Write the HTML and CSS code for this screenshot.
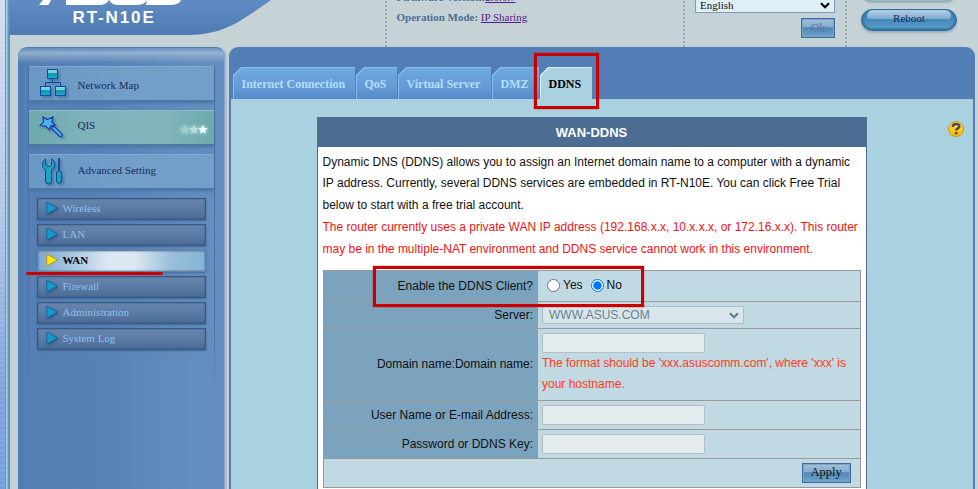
FILE: index.html
```html
<!DOCTYPE html>
<html lang="en">
<head>
<meta charset="utf-8">
<title>RT-N10E</title>
<link rel="stylesheet" href="styles.css">
</head>
<body>
<div class="page">
  <div class="edge"></div>
  <div class="app">
    <header class="header">
      <div class="brand">
        <svg class="brand-bg" width="376" height="36" viewBox="0 0 376 36">
          <defs><linearGradient id="hb" x1="0" y1="0" x2="0" y2="1"><stop offset="0" stop-color="#5f8bc2"/><stop offset="1" stop-color="#4f7ab3"/></linearGradient></defs>
          <path d="M0 0H261C229 22 214 35 174 35H0Z" fill="url(#hb)"/>
          <path d="M33 0h8l-2.500 5h-9.500zM56 0h42.500q0 3-7 5H56zM99 0h38q-2 5-11 5h-17q-8 0-10-5zM137 0h34q-1 5-12 5h-23z" fill="#fff"/>
        </svg>
        <span class="model">RT-N10E</span>
      </div>
      <div class="info dotted">
        <div>Firmware Version:<a>2.0.0.7</a></div>
        <div>Operation Mode: <a>IP Sharing</a></div>
      </div>
      <div class="lang dotted">
        <div class="select english">English
          <svg width="10" height="7" viewBox="0 0 10 7"><path d="M1 1.200l4 4 4-4" fill="none" stroke="#000" stroke-width="2.200"/></svg></div>
        <div class="btn ok">Ok</div>
      </div>
      <div class="actions dotted">
        <div class="pill ghost"></div>
        <div class="pill reboot"><span>Reboot</span></div>
      </div>
    </header>
    <div class="columns">
      <nav class="sidebar">
        <div class="rail">
          <div class="item">
            <svg width="32" height="34" viewBox="0 0 32 34"><defs><linearGradient id="ic" x1="0" y1="0" x2="0" y2="1"><stop offset="0" stop-color="#86d2df"/><stop offset=".42" stop-color="#6fcbd7"/><stop offset=".45" stop-color="#0791b5"/><stop offset="1" stop-color="#20b0cc"/></linearGradient></defs>
              <g fill="url(#ic)" stroke="#054d98"><path fill="none" d="M13.500 12v4M6.500 20v-4.500h15V20"/><rect x="8.500" y="2.500" width="10" height="9"/><rect x="1.500" y="19.500" width="10" height="9"/><rect x="16.500" y="19.500" width="10" height="9"/></g></svg>
            <span>Network Map</span>
          </div>
          <div class="item qis">
            <svg width="32" height="34" viewBox="0 0 32 34"><path d="M12.500 17.500l2.500-2.500 8 8.200q.6 2.800-2.200 2.300zM4 6l4.200 2.600L14 6l-1.200 5.200L16.500 14l-4.800.8-1.500 4-3.200-3.600L1 14.500l3.500-3.700z" fill="#4fb4e6" stroke="#153eae" stroke-width="1.200"/></svg>
            <span>QIS</span>
            <svg class="stars" width="28" height="12" viewBox="0 0 28 12"><defs><path id="st" d="M5 .800l1.400 3 3.300.400-2.400 2.200.6 3.300L5 8 2.100 9.700l.6-3.300L.3 4.200l3.300-.4z"/></defs><use href="#st" fill="#a1cdca"/><use href="#st" x="9" fill="#b7dfdd"/><use href="#st" x="18" fill="#f2ffff"/></svg>
          </div>
          <div class="item adv">
            <svg width="32" height="34" viewBox="0 0 32 34"><g fill="#1ea3c4" stroke="#054d87"><path d="M6.500 4v6l2 1.500h2l2-1.500V4q3.500 1.500 3.500 5.500 0 3.500-3.500 5.500v11q0 3-3 3t-3-3V15Q3.500 13 3.500 9.500 3.500 5.500 6.500 4z"/><path d="M20 3v13" stroke-width="1.800"/><rect x="17.500" y="16" width="5" height="12" rx="2"/></g></svg>
            <span>Advanced Setting</span>
          </div>
          <div class="submenu">
            <div class="sub"><svg width="12" height="14" viewBox="0 0 12 14"><path d="M.8 1l10.500 6L.8 13z"/></svg>Wireless</div>
            <div class="sub"><svg width="12" height="14" viewBox="0 0 12 14"><path d="M.8 1l10.500 6L.8 13z"/></svg>LAN</div>
            <div class="sub active"><svg width="12" height="14" viewBox="0 0 12 14"><path d="M.8 1l10.500 6L.8 13z"/></svg>WAN</div>
            <div class="sub"><svg width="12" height="14" viewBox="0 0 12 14"><path d="M.8 1l10.500 6L.8 13z"/></svg>Firewall</div>
            <div class="sub"><svg width="12" height="14" viewBox="0 0 12 14"><path d="M.8 1l10.500 6L.8 13z"/></svg>Administration</div>
            <div class="sub"><svg width="12" height="14" viewBox="0 0 12 14"><path d="M.8 1l10.500 6L.8 13z"/></svg>System Log</div>
          </div>
        </div>
      </nav>
      <main class="main">
        <div class="tabs">
          <div class="tab t1"><span>Internet Connection</span></div>
          <div class="tab t2"><span>QoS</span></div>
          <div class="tab t3"><span>Virtual Server</span></div>
          <div class="tab t4"><span>DMZ</span></div>
          <div class="tab t5 current"><span>DDNS</span></div>
        </div>
        <div class="content">
          <section class="panel">
            <h1>WAN-DDNS</h1>
            <div class="text">
              <p>Dynamic DNS (DDNS) allows you to assign an Internet domain name to a computer with a dynamic<br>IP address. Currently, several DDNS services are embedded in RT-N10E. You can click Free Trial<br>below to start with a free trial account.</p>
              <p class="warn">The router currently uses a private WAN IP address (192.168.x.x, 10.x.x.x, or 172.16.x.x). This router<br>may be in the multiple-NAT environment and DDNS service cannot work in this environment.</p>
            </div>
            <div class="form">
              <div class="label">Enable the DDNS Client?</div>
              <div class="field radios"><i class="radio"></i><span>Yes</span><i class="radio on"></i><span>No</span></div>
              <div class="label">Server:</div>
              <div class="field"><div class="select host">WWW.ASUS.COM
                <svg width="10" height="7" viewBox="0 0 10 7"><path d="M1 1.200l4 4 4-4" fill="none" stroke="#5d7f8c" stroke-width="2.200"/></svg></div></div>
              <div class="label even">Domain name:Domain name:</div>
              <div class="field domain"><div class="input"></div><p>The format should be 'xxx.asuscomm.com', where 'xxx' is<br>your hostname.</p></div>
              <div class="label">User Name or E-mail Address:</div>
              <div class="field"><div class="input"></div></div>
              <div class="label">Password or DDNS Key:</div>
              <div class="field"><div class="input"></div></div>
              <div class="foot"><div class="btn apply">Apply</div></div>
            </div>
          </section>
          <svg class="help" width="18" height="18" viewBox="0 0 18 18"><defs><linearGradient id="hg" x1="0" y1="0" x2="0" y2="1"><stop offset="0" stop-color="#f7e48a"/><stop offset=".5" stop-color="#f9cf20"/><stop offset="1" stop-color="#edb60c"/></linearGradient></defs><circle cx="9" cy="9" r="7.500" fill="url(#hg)" stroke="#c9981c"/><path d="M5.700 7Q5.700 4 9 4q3.400 0 3.400 2.300 0 1.400-1.700 2-1.500.5-1.500 2.200M9.200 12v2.300" fill="none" stroke="#4c4b55" stroke-width="2.400"/></svg>
        </div>
      </main>
    </div>
  </div>
  <div class="mark mark-tab"></div>
  <div class="mark mark-client"></div>
  <div class="mark-line"></div>
</div>
</body>
</html>
```
FILE: styles.css
```css
* { box-sizing: border-box; }
body { margin: 0; overflow: hidden; font-family: "Liberation Serif", serif; }
p, h1 { margin: 0; }
svg { display: block; flex: none; }

.page { position: relative; display: flex; width: 978px; height: 489px; overflow: hidden; background: #c5d2d6; }
.edge {
  width: 10px;
  background:
    linear-gradient(90deg, transparent 5px, #6798c7 5px, #6798c7 6px, #a4cfdf 6px, #a4cfdf 7px, #6d9fcb 8px, #5681b5 10px),
    repeating-linear-gradient(180deg, rgba(255,255,255,.13) 0 1px, transparent 1px 5px),
    linear-gradient(180deg, #d3def0 0, #c3d4ee 100px, #b4c9e9 200px, #7fa3dc 400px, #789fda 489px);
}
.app { flex: 1; display: flex; flex-direction: column; }

.header { display: flex; height: 47px; flex: none; }
.brand { position: relative; width: 375px; }
.brand-bg { position: absolute; left: 0; top: 0; }
.model { position: absolute; left: 62.500px; top: 8px; color: #fff; font: bold 17px/19px "Liberation Sans", sans-serif; letter-spacing: 1.900px; }
.dotted { background: repeating-linear-gradient(180deg, #c5d2d6 0 1px, #98a9b2 1px 3px, #c5d2d6 3px 4px) 0 0 / 2px 100% no-repeat; }
.info { width: 298px; padding-left: 11.500px; color: #4d6d92; font-weight: bold; font-size: 11px; line-height: 20px; }
.info div:first-child { margin-top: -13px; }
.info a { font-weight: normal; color: #551a8b; text-decoration: underline; }
.lang { width: 162px; padding-left: 12px; }
.select { display: flex; align-items: center; justify-content: space-between; }
.english { width: 140px; height: 20px; margin-top: -7px; padding: 5px 4px 1px; background: #e0eff5; border: 1px solid #7b9cc0; font-size: 11px; color: #111; }
.btn { display: flex; align-items: center; justify-content: center; border: 1px solid #41699d; box-shadow: inset 0 0 0 1px #7ba5c8; background: linear-gradient(180deg, #a3bfda 0, #83acd0 45%, #5088b4 48%, #6da2ca 100%); }
.ok { width: 34px; height: 20px; margin: 5px 0 0 106px; color: #57799b; font-size: 12px; }
.actions { flex: 1; padding-left: 16px; }
.pill { width: 96px; height: 22px; border-radius: 11px; border: 1px solid #2d699c; background: linear-gradient(180deg, #4581b2, #4489b9 50%, #62a3cd); box-shadow: 0 2px 2px #a2b4bb, inset 0 -2px 1px #357da9, inset 2px 0 1px #357da9, inset -2px 0 1px #357da9; }
.reboot span { display: block; height: 9px; margin: 0 5px; border-radius: 6px 6px 3px 3px; background: linear-gradient(180deg, #b4cfe3, #7fabd0); text-align: center; font-size: 11px; line-height: 17px; color: #102c60; }
.pill.ghost { margin: -20px 0 7px; background: #9fbdc3; border-color: #8eabb0; box-shadow: 0 1px 2px #a2b4bb; }

.columns { flex: 1; display: flex; padding: 0 3px 0 8px; gap: 4px; min-height: 0; }
.sidebar { width: 207px; padding: 18px 10px 0; border-radius: 9px 9px 0 0; border-top: 1px solid #507cb4; border-right: 1px solid #83a4cc; box-shadow: 2px 0 1px #b5bfc2;
  background: linear-gradient(180deg, rgba(174,197,219,.15) 0, rgba(174,197,219,.68) 5px, rgba(174,197,219,.45) 8px, transparent 15px), linear-gradient(90deg, #507cb4, #557fb5 8px, #5682b8 40%, #648ebf 85%); }
.rail { height: 335px; width: 187px;
  background: linear-gradient(180deg, #48709f 0, #4a72a2 75%, transparent) 0 0 / 1px 100% no-repeat, linear-gradient(180deg, #48709f 0, #4a72a2 75%, transparent) 100% 0 / 1px 100% no-repeat; }
.item { position: relative; display: flex; align-items: center; height: 35px; margin: 0 1px 9px; padding-left: 10px; gap: 6.500px; font-size: 11px; color: #162d5c; border-top: 1px solid #83aad0; border-bottom: 1px solid #4e7aa7;
  background: linear-gradient(90deg, #6a97c4, #739fc9 60%, #729eca); box-shadow: 0 2px 3px #4a73a4; }
.item > svg { filter: drop-shadow(2px 2px 1px rgba(40,70,120,.4)); }
.item span { padding-top: 3px; }
.item.qis { background: linear-gradient(90deg, #6ca9ad, #7eb2ba 30%, #83b5bd 70%, #6caaae); border-top-color: #8abdc7; }
.item.qis span { padding: 0 0 5px; }
.item.adv span { padding: 0 0 3px; }
.item .stars { margin: 4px 6px 0 auto; filter: drop-shadow(0 0 2px #b5e5e3); }
.submenu { padding: 0 9px; display: grid; gap: 4px; margin-top: 9px; }
.sub { height: 22px; display: flex; align-items: center; gap: 4.500px; padding: 0 0 2px 8px; border: 1px solid #38587f; font-size: 11px; color: #8dc0ec; background: linear-gradient(180deg, #6885ad, #5b7ba5 50%, #496b95); box-shadow: inset 0 0 2px #38587f, 0 1px 2px #43699a; }
.sub svg { fill: #179bcb; stroke: #1767a3; filter: drop-shadow(1px 1px 1px #2d5180); }
.active { color: #000; font-weight: bold; background: linear-gradient(90deg, #7cabd1, #b8d1e6 28%, #dce8f2 42%, #dce8f2 58%, #9bbedb 80%, #86b4d7); border-color: #66819c; }
.active svg { fill: #ffec00; stroke: #c48922; filter: none; }

.main { width: 746px; display: flex; flex-direction: column; background: #537eb5; border-radius: 9px 9px 0 0; padding: 20px 2px 0; }
.tabs { display: flex; height: 32px; gap: 1px; padding-left: 2px; flex: none; }
.tab { padding: 1px 0 0 1px; background: #83bfee; clip-path: polygon(0 8px, 8px 0, 100% 0, 100% 100%, 0 100%); color: #b2dff9; font-weight: bold; font-size: 12px; line-height: 31px; }
.tab span { display: block; height: 31px; padding: 1px 0 0 7.500px; white-space: nowrap; background: linear-gradient(180deg, #70a8e0, #659bd5 60%, #568acb); clip-path: polygon(0 8px, 8px 0, 100% 0, 100% 100%, 0 100%); }
.t1 { width: 122px; } .t2 { width: 41px; } .t3 { width: 93px; } .t4 { width: 47px; } .t5 { width: 52px; }
.tab.current { background: #d5f0f6; color: #000; }
.tab.current span { background: #aad1df; }
.content { flex: 1; display: flex; align-items: flex-start; background: #aad1df; padding: 18px 8px 0 86px; justify-content: space-between; min-height: 0; }
.help { margin-top: 3px; }
.panel { width: 550px; height: 372px; background: #fff; border: solid #4d6c92; border-width: 0 1px; font: 12px/21.600px "Liberation Sans", sans-serif; }
.panel h1 { height: 30px; padding-right: 1px; background: #4d6c92; color: #fff; text-align: center; font-size: 13px; line-height: 31px; }
.text { height: 123px; padding: 4.500px 0 0 4.500px; white-space: nowrap; color: #111; line-height: 21.800px; }
.text .warn { color: #f31212; }
.form { width: 538px; margin-left: 5px; padding: 1px; display: grid; grid-template: 30px 26px 71px 28px 28px 28px / 213px 322px; gap: 1px; background: #999; color: #111; }
.label { background: #7ba3bd; display: flex; align-items: center; justify-content: flex-end; padding: 2px 4px 0 0; }
.label.even { padding-top: 0; }
.field { display: flex; align-items: center; background: #c0d9e2; padding-left: 4px; }
.radios { padding-left: 9px; padding-bottom: 2px; gap: 3px; }
.radios span { padding-top: 1px; }
.radio { width: 13px; height: 13px; border: 1px solid #767676; border-radius: 50%; background: #fff; }
.radio.on { border-color: #0075ff; margin-left: 5px; background: radial-gradient(circle, #0075ff 3.800px, #fff 4.500px); }
.host { width: 202px; height: 18px; padding: 1px 4px 0 6px; border: 1px solid #acbec5; border-radius: 2px; background: #d8e6eb; color: #67828f; }
.domain { flex-direction: column; align-items: flex-start; padding-top: 4px; white-space: nowrap; }
.domain p { line-height: 21px; color: #ff3919; }
.input { width: 163px; height: 20px; flex: none; border: 1px solid #b1bfc4; border-radius: 2px; background: #e3ebed; }
.foot { grid-column: 1 / -1; display: flex; align-items: center; justify-content: flex-end; background: #c0d9e2; padding-right: 9px; }
.apply { width: 49px; height: 20px; padding: 0 1px 2px 0; font: 12.500px "Liberation Serif", serif; color: #111; }

.mark { position: absolute; border: 3px solid #ca0000; box-shadow: 0 0 1px #ca0000; }
.mark-tab { left: 534px; top: 53px; width: 65px; height: 56px; }
.mark-client { left: 373px; top: 266px; width: 271px; height: 41px; }
.mark-line { position: absolute; left: 26px; top: 272px; width: 137px; height: 3px; border-radius: 2px; background: #ca0000; }
```
